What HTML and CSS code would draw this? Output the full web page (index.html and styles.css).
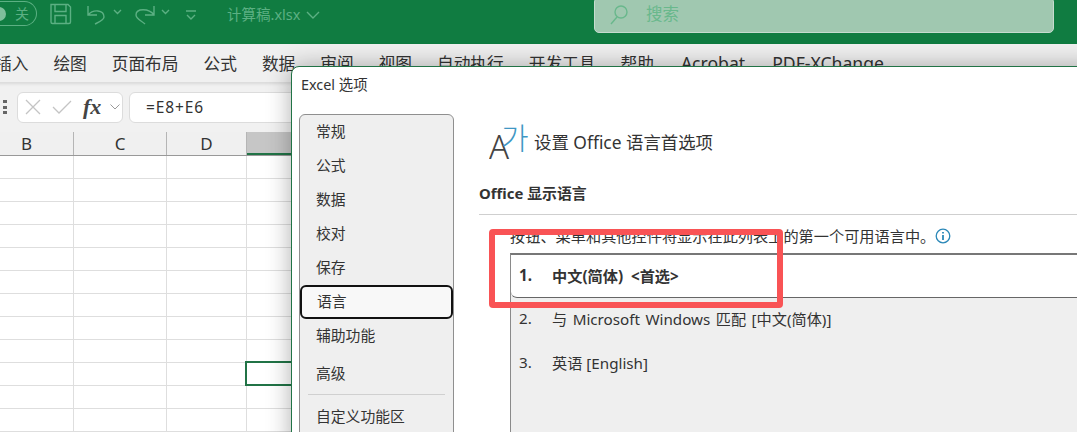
FILE: index.html
```html
<!DOCTYPE html>
<html lang="zh-CN">
<head>
<meta charset="utf-8">
<title>Excel 选项</title>
<link rel="stylesheet" href="styles.css">
</head>
<body>
<div class="app">
  <header class="titlebar">
    <div class="toggle"><span class="knob"></span><span class="toggle-label">关</span></div>
    <svg class="qat" width="220" height="30" viewBox="0 0 220 30" fill="none" stroke="currentColor" stroke-width="1.4">
      <path d="M12 4.500H29L31.500 7V22A1.500 1.500 0 0 1 30 23.500H13.500A1.500 1.500 0 0 1 12 22Z"/>
      <path d="M16 4.500V11.500H27V4.500M16 23.500V15.500H27V23.500"/>
      <path d="M49 6V15H58M49 15C54 9 65 9.500 65 17C65 20 60 22 56 24"/>
      <path d="M75 10L78.500 13.500L82 10"/>
      <path d="M115 6V15H106M115 15C110 8 97 8 97 15C97 19 103 21 106 24"/>
      <path d="M123 10L126.500 13.500L130 10"/>
      <path d="M147 11H157M148 15L152 19L156 15"/>
    </svg>
    <span class="filename">计算稿.xlsx</span>
    <svg class="file-chevron" width="14" height="10" viewBox="0 0 14 10" fill="none" stroke="currentColor" stroke-width="1.4"><path d="M1 2L7 8L13 2"/></svg>
    <div class="search">
      <svg width="24" height="26" viewBox="0 0 24 26" fill="none" stroke="currentColor" stroke-width="1.400"><circle cx="14" cy="9" r="6"/><path d="M10 14L4 21"/></svg>
      <span>搜索</span>
    </div>
  </header>

  <nav class="tabs">
    <span>插入</span><span>绘图</span><span>页面布局</span><span>公式</span><span>数据</span><span>审阅</span><span>视图</span><span>自动执行</span><span>开发工具</span><span>帮助</span><span class="tab-latin">Acrobat</span><span class="tab-latin">PDF-XChange</span>
  </nav>

  <div class="formula-row">
    <div class="grip"><i></i><i></i><i></i></div>
    <div class="fx-box">
      <svg width="60" height="18" viewBox="0 0 60 18" fill="none" stroke="#c4c4c4" stroke-width="1.300"><path d="M1 2L15 16M15 2L1 16M28 9L34 15L46 3"/></svg>
      <span class="fx">fx</span>
      <svg width="10" height="6" viewBox="0 0 10 6" fill="none" stroke="#9a9a9a"><path d="M0.500 0.500L5 5L9.500 0.500"/></svg>
    </div>
    <div class="formula-input">=E8+E6</div>
  </div>

  <div class="col-headers">
    <div class="col">B</div>
    <div class="col">C</div>
    <div class="col">D</div>
    <div class="col col-active"></div>
  </div>

  <div class="sheet">
    <div class="selected-cell"></div>
  </div>

  <section class="dialog">
    <div class="dialog-title">Excel 选项</div>
    <div class="dialog-body">
      <aside class="sidebar">
        <div class="side-item">常规</div>
        <div class="side-item">公式</div>
        <div class="side-item">数据</div>
        <div class="side-item">校对</div>
        <div class="side-item">保存</div>
        <div class="side-item side-current">语言</div>
        <div class="side-item">辅助功能</div>
        <div class="side-item side-gap">高级</div>
        <div class="side-sep"></div>
        <div class="side-item">自定义功能区</div>
      </aside>
      <main class="content">
        <div class="heading">
          <svg class="lang-icon" width="43" height="56" viewBox="0 0 43 56">
            <text class="lang-a" x="0" y="45">A</text>
            <text class="lang-k" x="12" y="35">가</text>
          </svg>
          <h1>设置 Office 语言首选项</h1>
        </div>
        <h2>Office 显示语言</h2>
        <div class="desc">
          <span>按钮、菜单和其他控件将显示在此列表上的第一个可用语言中。</span>
          <svg width="16" height="16" viewBox="0 0 16 16" fill="none" stroke="#2b88b8" stroke-width="1.300"><circle cx="8" cy="8" r="6.800"/><path d="M8 7V12" stroke-width="1.800"/><path d="M8 4V5.600" stroke-width="1.800"/></svg>
        </div>
        <div class="lang-list">
          <div class="lang lang-first"><span class="num">1.</span><span>中文(简体) &lt;首选&gt;</span></div>
          <div class="lang lang-second"><span class="num">2.</span><span>与 Microsoft Windows 匹配 [中文(简体)]</span></div>
          <div class="lang"><span class="num">3.</span><span>英语 [English]</span></div>
        </div>
      </main>
    </div>
  </section>

  <div class="annotation"></div>
</div>
</body>
</html>
```
FILE: styles.css
```css
* { box-sizing: border-box; }
html, body { margin: 0; padding: 0; }
body {
  width: 1077px;
  height: 432px;
  overflow: hidden;
  background: #fff;
  font-family: "Noto Sans", "Noto Sans CJK SC", sans-serif;
}
.app {
  position: relative;
  width: 1077px;
  height: 432px;
  overflow: hidden;
  display: flex;
  flex-direction: column;
}

/* title bar */
.titlebar {
  position: relative;
  flex: 0 0 44px;
  display: flex;
  align-items: flex-start;
  background: #107c41;
  color: #5cb083;
}
.toggle {
  width: 38px;
  height: 25px;
  margin: 1px 0 0 -1px;
  border: 1px solid #5cb083;
  border-left: 0;
  border-radius: 0 13px 13px 0;
  display: flex;
  align-items: center;
}
.knob {
  width: 7px;
  height: 14px;
  background: #7fbf9c;
  border-radius: 0 7px 7px 0;
}
.toggle-label { margin-left: 9px; font-size: 14px; line-height: 22px; }
.qat { margin-left: 2px; margin-right: -32px; flex: none; }
.filename {
  font-size: 14.500px;
  line-height: 28px;
}
.file-chevron { margin: 10px 0 0 6px; flex: none; }
.search {
  position: absolute;
  left: 594px;
  top: -3px;
  width: 460px;
  height: 36px;
  padding-left: 12px;
  display: flex;
  align-items: center;
  gap: 15px;
  background: #a0c8b0;
  border: 1px solid #c6dccf;
  border-radius: 5px;
  color: #69b88c;
  font-size: 16.500px;
}
.search svg { margin-top: 1px; }
.search span { margin-top: -4px; }

/* ribbon tabs */
.tabs {
  position: relative;
  z-index: 1;
  flex: 0 0 38px;
  display: flex;
  align-items: center;
  gap: 25px;
  margin-left: -5px;
  background: #f0f0f0;
  color: #333;
  font-size: 16.700px;
  white-space: nowrap;
  box-shadow: 0 2px 3px rgba(0, 0, 0, .1);
}
.tab-latin { margin-left: 2px; font-size: 17.600px; }

/* formula bar */
.formula-row {
  flex: 0 0 50px;
  display: flex;
  align-items: center;
  padding-left: 3px;
  background: #f1f1f1;
}
.grip {
  width: 4px;
  height: 14px;
  margin-right: 10px;
  display: flex;
  flex-direction: column;
  justify-content: space-between;
}
.grip i { display: block; width: 4px; height: 3px; background: #666; }
.fx-box {
  width: 106px;
  height: 31px;
  display: flex;
  align-items: center;
  padding-left: 7px;
  background: #fff;
  border: 1px solid #dcdcdc;
  border-radius: 6px;
}
.fx-box svg:first-child { flex: none; }
.fx {
  width: 27px;
  margin-left: -2px;
  font: italic 700 22px/1 "Liberation Serif", serif;
  color: #444;
}
.formula-input {
  flex: 1;
  height: 31px;
  margin-left: 6px;
  padding-left: 16px;
  background: #fff;
  border: 1px solid #dcdcdc;
  border-radius: 6px 0 0 6px;
  font-size: 15.500px;
  line-height: 28px;
  letter-spacing: .9px;
  color: #333;
}

/* column headers */
.col-headers {
  flex: 0 0 23px;
  display: grid;
  grid-template-columns: 94px 93px 80px 100px;
  margin-left: -20px;
  background: #f0f0f0;
  border-bottom: 1px solid #999;
  font-size: 17px;
  line-height: 23px;
  color: #333;
  text-align: center;
}
.col { border-right: 1px solid #b5b5b5; }
.col-active {
  height: 23px;
  border-right: 0;
  border-bottom: 2px solid #217346;
  background: #c6c6c6;
}

/* cells */
.sheet {
  position: relative;
  flex: 1;
  background-color: #fff;
  background-image:
    repeating-linear-gradient(to bottom, transparent 0, transparent 22px, #dedede 22px, #dedede 23px),
    linear-gradient(to right, transparent 73px, #dedede 73px, #dedede 74px, transparent 74px),
    linear-gradient(to right, transparent 166px, #dedede 166px, #dedede 167px, transparent 167px),
    linear-gradient(to right, transparent 246px, #dedede 246px, #dedede 247px, transparent 247px);
}
.selected-cell {
  position: absolute;
  left: 245px;
  top: 205px;
  width: 60px;
  height: 25px;
  border: 2px solid #217346;
}

/* dialog */
.dialog {
  position: absolute;
  z-index: 2;
  left: 291px;
  top: 66px;
  width: 810px;
  height: 390px;
  background: #fff;
  border: 1px solid #217346;
  border-radius: 8px;
  box-shadow: 0 0 24px rgba(0, 0, 0, .32);
  color: #333;
}
.dialog-title {
  height: 47px;
  padding-left: 9px;
  font-size: 14.400px;
  line-height: 36px;
}
.dialog-body { display: flex; align-items: flex-start; }
.sidebar {
  flex: 0 0 155px;
  height: 340px;
  margin-left: 7px;
  background: #efefef;
  border: 1px solid #8f8f8f;
  border-radius: 6px;
}
.side-item {
  height: 34px;
  padding-left: 16px;
  font-size: 14.800px;
  line-height: 33px;
  white-space: nowrap;
}
.side-current {
  padding-left: 15px;
  background: #f8f8f8;
  border: 2px solid #111;
  border-radius: 6px;
  line-height: 29px;
}
.side-gap { margin-top: 4px; }
.side-sep {
  height: 1px;
  margin: 3px 8px 5px;
  background: #d0d0d0;
}
.content { flex: 1; margin-left: 25px; min-width: 0; }
.heading {
  height: 56px;
  display: flex;
  align-items: center;
  gap: 2px;
  padding-left: 10px;
}
.lang-icon { flex: none; }
.lang-a { font-family: "Noto Sans", sans-serif; font-size: 33px; font-weight: 300; fill: #444; }
.lang-k { font-family: "Noto Sans CJK KR", sans-serif; font-size: 30px; font-weight: 300; fill: #3f97c4; }
h1 {
  margin: 0;
  font-size: 17.400px;
  font-weight: 400;
  line-height: 24px;
  color: #333;
}
h2 {
  margin: 0;
  height: 45px;
  padding: 12px 0 0;
  font-size: 14.900px;
  font-weight: 700;
  line-height: 22px;
  color: #333;
  border-bottom: 1px solid #cfcfcf;
}
.desc {
  height: 38px;
  padding: 10px 0 0 31px;
  display: flex;
  align-items: flex-start;
  gap: 0;
  font-size: 15.200px;
  line-height: 22px;
  white-space: nowrap;
}
.desc svg { margin-top: 3px; flex: none; }
.lang-list {
  height: 200px;
  margin-left: 31px;
  background: #efefef;
  border-left: 1px solid #8a8a8a;
  border-top: 2px solid #777;
  font-size: 15.200px;
}
.lang {
  height: 44px;
  display: flex;
  align-items: center;
  padding: 0 0 3px 8px;
}
.lang .num { width: 33px; }
.lang-first {
  height: 43px;
  background: #fff;
  border-bottom: 1px solid #666;
  border-bottom-left-radius: 6px;
  font-weight: 700;
  word-spacing: 4px;
}
.lang-second { height: 43px; word-spacing: 1.500px; }

/* red markup over the screenshot */
.annotation {
  position: absolute;
  z-index: 3;
  left: 489px;
  top: 229px;
  width: 294px;
  height: 79px;
  border: 6.500px solid #f95355;
  border-radius: 4px;
}
```
